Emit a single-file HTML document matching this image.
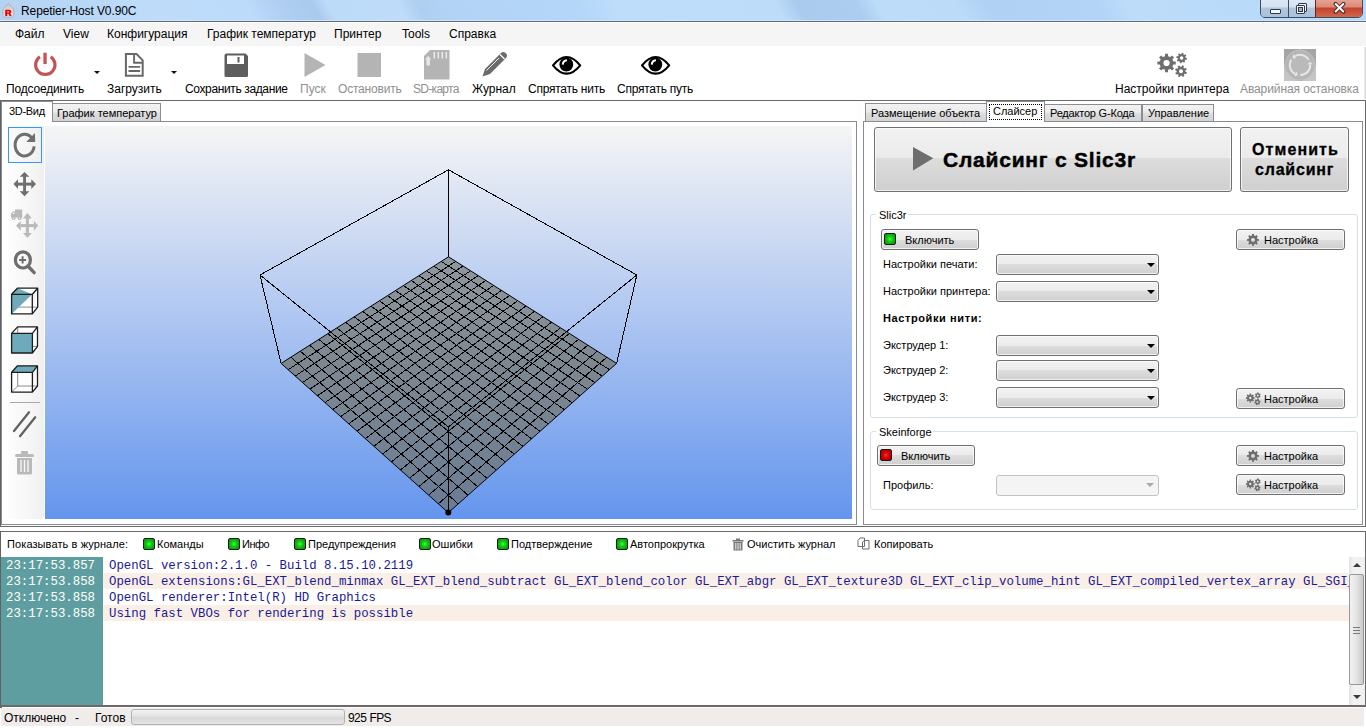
<!DOCTYPE html>
<html><head><meta charset="utf-8">
<style>
*{margin:0;padding:0;box-sizing:border-box}
html,body{width:1366px;height:728px;overflow:hidden;background:#fff;font-family:"Liberation Sans",sans-serif;color:#000}
.a{position:absolute}
.t12{position:absolute;font-size:12px;line-height:12px;white-space:nowrap}
.t11{position:absolute;font-size:11px;line-height:11px;white-space:nowrap}
.dis{color:#8f8f8f}
.btn{position:absolute;border:1px solid #707070;border-radius:3px;background:linear-gradient(#f2f2f2 0%,#ebebeb 50%,#dddddd 50%,#cfcfcf 100%);box-shadow:inset 0 0 0 1px rgba(255,255,255,.7)}
.cmb{position:absolute;width:163px;height:21px;border:1px solid #707070;border-radius:3px;background:linear-gradient(#f2f2f2 0%,#ebebeb 50%,#dddddd 50%,#cfcfcf 100%);box-shadow:inset 0 0 0 1px rgba(255,255,255,.7)}
.cmb:after{content:"";position:absolute;left:150px;top:8px;border-left:4px solid transparent;border-right:4px solid transparent;border-top:4px solid #000}
.led{position:absolute;width:12px;height:12px;border:1px solid #1a1a1a;border-radius:2px}
.g{background:radial-gradient(circle at 50% 50%,#3cff3c 0,#10c010 45%,#009000 100%)}
.r{background:radial-gradient(circle at 50% 50%,#ff3030 0,#d00000 45%,#a00000 100%)}
.tab{position:absolute;border:1px solid #898c95;border-bottom:none;background:linear-gradient(#f3f3f3,#ebebeb 50%,#dddddd 51%,#cfcfcf)}
.tabsel{position:absolute;border:1px solid #898c95;border-bottom:none;background:#fff}
.mono{position:absolute;font-family:"Liberation Mono",monospace;font-size:12.36px;line-height:12px;white-space:nowrap}
</style></head><body>
<!-- title bar -->
<div class="a" style="left:0;top:0;width:1366px;height:20px;background:linear-gradient(60deg,#b4d3f3 0.4%,#b9d8f7 7.7%,#bedcfa 11.3%,#bcdaf9 18.6%,#b0cff2 20.7%,#a9caee 23.3%,#bcdbf9 24.4%,#bedcfa 29.5%,#afcff1 30.9%,#b2d3f5 33.1%,#b4d6f8 42.5%,#bdddfb 45.4%,#bcdcfa 57.0%,#aacbee 58.5%,#accdf0 62.8%,#bcdcfa 64.3%,#bbdbf9 70.1%,#b0d1f4 72.3%,#b3d4f6 80.3%,#bcdcfa 82.4%,#b8d8f8 99.6%)"></div>
<div class="a" style="left:0;top:20px;width:1366px;height:1px;background:#d6e6f6"></div>
<div class="a" style="left:0;top:21px;width:1366px;height:1px;background:#5b6b7d"></div>
<div class="a" style="left:0;top:22px;width:1366px;height:1px;background:#fff"></div>
<svg class="a" style="left:2px;top:3px" width="13" height="15" viewBox="0 0 13 15"><defs><linearGradient id="ic" x1="0" y1="0" x2="0" y2="1"><stop offset="0" stop-color="#c8c8c8"/><stop offset="1" stop-color="#e8e8e8"/></linearGradient></defs><path d="M6.2 0.8 L9.5 3.5 Q11.8 5.5 11.8 8.5 L11.8 11.5 Q11.8 14 9.5 14 L3 14 Q0.8 14 0.8 11.5 L0.8 8.5 Q0.8 5.5 3 3.5 Z" fill="url(#ic)" stroke="#a8a8a8" stroke-width="0.8"/><path d="M3.2 6.8 H7.2 Q9.4 6.8 9.4 8.6 Q9.4 10 8.2 10.4 L9.8 13 H7.6 L6.4 10.8 H5.3 V13 H3.2 Z M5.3 8.2 V9.5 H6.9 Q7.4 9.5 7.4 8.85 Q7.4 8.2 6.9 8.2 Z" fill="#ee0000" fill-rule="evenodd"/></svg>
<div class="t12" style="left:21px;top:5px;letter-spacing:-0.1px">Repetier-Host V0.90C</div>
<!-- caption buttons -->
<div class="a" style="left:1260px;top:-3px;width:103px;height:21px;border:1px solid #3d4c5f;border-radius:0 0 5px 5px;overflow:hidden">
 <div class="a" style="left:0;top:0;width:27px;height:20px;background:linear-gradient(#dfeaf6 0%,#d3e1f0 45%,#b1c6dd 50%,#aac0d9 100%)"></div>
 <div class="a" style="left:27px;top:0;width:1px;height:20px;background:#3d4c5f"></div>
 <div class="a" style="left:28px;top:0;width:26px;height:20px;background:linear-gradient(#dfeaf6 0%,#d3e1f0 45%,#b1c6dd 50%,#aac0d9 100%)"></div>
 <div class="a" style="left:54px;top:0;width:1px;height:20px;background:#5a2a20"></div>
 <div class="a" style="left:55px;top:0;width:47px;height:20px;background:linear-gradient(#e9a89a 0%,#dc8a78 45%,#c4432c 50%,#d56a4f 100%)"></div>
 <div class="a" style="left:9px;top:11px;width:11px;height:5px;background:#f4f6f9;border:1px solid #2e3a48;border-radius:1px"></div>
 <div class="a" style="left:37px;top:5px;width:9px;height:9px;border:1px solid #2e3a48;background:#f4f6f9;border-radius:1px"></div>
 <div class="a" style="left:35px;top:7px;width:9px;height:9px;border:1px solid #2e3a48;background:#f4f6f9;border-radius:1px"></div>
 <div class="a" style="left:37px;top:9px;width:5px;height:5px;border:1px solid #2e3a48;background:#9fb4cc"></div>
 <svg class="a" style="left:72px;top:4px" width="13" height="12" viewBox="0 0 13 12"><path d="M2.5 1.8 L10.5 9.8 M10.5 1.8 L2.5 9.8" stroke="#3b2a28" stroke-width="3.8" stroke-linecap="round"/><path d="M2.7 2 L10.3 9.6 M10.3 2 L2.7 9.6" stroke="#f6f6f6" stroke-width="2.1" stroke-linecap="round"/></svg>
</div>
<!-- menu bar -->
<div class="a" style="left:0;top:23px;width:1366px;height:23px;background:#f5f5f5"></div>
<div class="t12" style="left:15px;top:28px">Файл</div>
<div class="t12" style="left:63px;top:28px">View</div>
<div class="t12" style="left:107px;top:28px">Конфигурация</div>
<div class="t12" style="left:207px;top:28px">График температур</div>
<div class="t12" style="left:334px;top:28px">Принтер</div>
<div class="t12" style="left:402px;top:28px">Tools</div>
<div class="t12" style="left:449px;top:28px">Справка</div>
<!-- toolbar -->
<div class="a" style="left:0;top:46px;width:1366px;height:54px;background:#fff"></div>
<svg class="a" style="left:0;top:46px" width="1366" height="54" viewBox="0 46 1366 54">
 <!-- power -->
 <path d="M39.92 56.73 A9.7 9.7 0 1 0 50.68 56.73" fill="none" stroke="#c45454" stroke-width="3.1"/>
 <rect x="43.4" y="52.7" width="3.3" height="11.4" fill="#c45454"/>
 <path d="M94 71 h6 l-3 3 z" fill="#111"/>
 <!-- document -->
 <path d="M125.9 54.1 H136.6 L142.7 60.4 V75.8 H125.9 Z" fill="#fff" stroke="#686868" stroke-width="2" stroke-linejoin="miter"/>
 <path d="M134.1 54.1 V62.7 H142.7" fill="none" stroke="#686868" stroke-width="1.9"/>
 <path d="M129.2 66.8 H139.4 M129.2 71 H139.4" stroke="#686868" stroke-width="1.8" stroke-linecap="round"/>
 <path d="M171 71 h6 l-3 3 z" fill="#111"/>
 <!-- floppy -->
 <path d="M226.5 53.5 H245.5 L248 56 V75.5 Q248 77 246.5 77 H226 Q224.5 77 224.5 75.5 V55.5 Q224.5 53.5 226.5 53.5 Z" fill="#5e5e5e"/>
 <rect x="227" y="55.5" width="17" height="8.5" fill="#fff"/>
 <rect x="237.5" y="57" width="2" height="5.5" fill="#5e5e5e"/>
 <!-- play disabled -->
 <path d="M304.5 53 L325.5 65 L304.5 77 Z" fill="#b4b4b4"/>
 <!-- stop disabled -->
 <rect x="357.5" y="53" width="23.5" height="24" fill="#b4b4b4"/>
 <!-- sd card -->
 <path d="M430 50 H449.5 V79.5 H424 V56 Z" fill="#b4b4b4"/>
 <rect x="433.5" y="52" width="1.6" height="6.5" fill="#e8e8e8"/>
 <rect x="437.5" y="52" width="1.6" height="6.5" fill="#e8e8e8"/>
 <rect x="441.5" y="52" width="1.6" height="6.5" fill="#e8e8e8"/>
 <rect x="445.5" y="52" width="1.6" height="6.5" fill="#e8e8e8"/>
 <path d="M428.2 55.7 L431.3 59.6 H429.9 V65.6 H426.5 V59.6 H425.1 Z" fill="#e8e8e8"/>
 <!-- pencil -->
 <path d="M482.5 76.5 L485 69 L501 53 Q503.5 51 505.5 53 L506 53.5 Q508 55.5 506 58 L490 74 Z" fill="#6b6b6b"/>
 <path d="M486.5 70.5 L499 58" stroke="#fff" stroke-width="0.9"/>
 <path d="M500 54.5 L504.5 59" stroke="#fff" stroke-width="1.2"/>
 <!-- eyes -->
 <g id="eye">
 <path d="M553 65.3 Q566.6 48.6 580.2 65.3 Q566.6 82 553 65.3 Z" fill="#fff" stroke="#000" stroke-width="2.1" stroke-linejoin="round"/>
 <circle cx="566.3" cy="64.5" r="6.9" fill="#000"/>
 <path d="M562.8 64.6 Q563 60.4 567 60.2" stroke="#fff" stroke-width="2" fill="none"/>
 </g>
 <use href="#eye" x="89"/>
 <!-- gears -->
 <path d="M1165.08 56.16 L1165.02 53.83 L1168.08 53.83 L1168.02 56.16 L1170.35 57.12 L1171.96 55.43 L1174.12 57.59 L1172.43 59.20 L1173.39 61.53 L1175.72 61.47 L1175.72 64.53 L1173.39 64.47 L1172.43 66.80 L1174.12 68.41 L1171.96 70.57 L1170.35 68.88 L1168.02 69.84 L1168.08 72.17 L1165.02 72.17 L1165.08 69.84 L1162.75 68.88 L1161.14 70.57 L1158.98 68.41 L1160.67 66.80 L1159.71 64.47 L1157.38 64.53 L1157.38 61.47 L1159.71 61.53 L1160.67 59.20 L1158.98 57.59 L1161.14 55.43 L1162.75 57.12 Z M1169.65 63.00 A3.10 3.10 0 1 0 1163.45 63.00 A3.10 3.10 0 1 0 1169.65 63.00 Z M1181.50 54.00 L1181.72 52.70 L1183.55 53.07 L1183.25 54.35 L1184.36 55.10 L1185.43 54.34 L1186.46 55.89 L1185.34 56.59 L1185.60 57.90 L1186.90 58.12 L1186.53 59.95 L1185.25 59.65 L1184.50 60.76 L1185.26 61.83 L1183.71 62.86 L1183.01 61.74 L1181.70 62.00 L1181.48 63.30 L1179.65 62.93 L1179.95 61.65 L1178.84 60.90 L1177.77 61.66 L1176.74 60.11 L1177.86 59.41 L1177.60 58.10 L1176.30 57.88 L1176.67 56.05 L1177.95 56.35 L1178.70 55.24 L1177.94 54.17 L1179.49 53.14 L1180.19 54.26 Z M1183.40 58.00 A1.80 1.80 0 1 0 1179.80 58.00 A1.80 1.80 0 1 0 1183.40 58.00 Z M1181.57 66.74 L1182.03 65.29 L1184.02 66.01 L1183.44 67.42 L1184.56 68.44 L1185.91 67.75 L1186.80 69.67 L1185.40 70.26 L1185.46 71.77 L1186.91 72.23 L1186.19 74.22 L1184.78 73.64 L1183.76 74.76 L1184.45 76.11 L1182.53 77.00 L1181.94 75.60 L1180.43 75.66 L1179.97 77.11 L1177.98 76.39 L1178.56 74.98 L1177.44 73.96 L1176.09 74.65 L1175.20 72.73 L1176.60 72.14 L1176.54 70.63 L1175.09 70.17 L1175.81 68.18 L1177.22 68.76 L1178.24 67.64 L1177.55 66.29 L1179.47 65.40 L1180.06 66.80 Z M1183.00 71.20 A2.00 2.00 0 1 0 1179.00 71.20 A2.00 2.00 0 1 0 1183.00 71.20 Z" fill="#6e6e6e" fill-rule="evenodd"/>
 <!-- emergency -->
 <rect x="1284" y="49" width="32" height="32" fill="#b3b3b3"/>
 <path d="M1284 49 H1300 L1284 65 Z M1316 49 H1300 L1316 65 Z" fill="#a5a5a5"/>
 <path d="M1284 81 V67 L1298 81 Z M1316 81 V67 L1302 81 Z" fill="#c6c6c6"/>
 <circle cx="1300" cy="65" r="15" fill="#b5b5b5" stroke="#c2c2c2" stroke-width="1"/>
 <circle cx="1300" cy="65" r="12.3" fill="#bababa"/>
 <path d="M1308.65 59.59 A10.2 10.2 0 0 0 1294.59 56.35 M1300.36 75.19 A10.2 10.2 0 0 0 1310.19 64.47 M1291.26 59.75 A10.2 10.2 0 0 0 1295.37 74.09 " fill="none" stroke="#e9e9e9" stroke-width="1.7"/>
 <path d="M1292.66 57.91 L1296.08 58.72 L1293.11 53.98 Z M1309.75 62.02 L1307.39 64.61 L1312.98 64.32 Z M1297.71 74.94 L1296.64 71.59 L1294.10 76.58 Z " fill="#e9e9e9"/>
</svg>
<div class="a" style="left:1364px;top:47px;width:2px;height:52px;background:linear-gradient(90deg,#f4f4f4,#d4d4d4)"></div>
<div class="t12" style="left:6px;top:83px;letter-spacing:-0.17px">Подсоединить</div>
<div class="t12" style="left:107px;top:83px">Загрузить</div>
<div class="t12" style="left:185px;top:83px;letter-spacing:-0.37px">Сохранить задание</div>
<div class="t12 dis" style="left:300px;top:83px">Пуск</div>
<div class="t12 dis" style="left:338px;top:83px;letter-spacing:-0.2px">Остановить</div>
<div class="t12 dis" style="left:413px;top:83px;letter-spacing:-0.7px">SD-карта</div>
<div class="t12" style="left:472px;top:83px">Журнал</div>
<div class="t12" style="left:528px;top:83px;letter-spacing:-0.25px">Спрятать нить</div>
<div class="t12" style="left:617px;top:83px;letter-spacing:-0.25px">Спрятать путь</div>
<div class="t12" style="left:1115px;top:83px">Настройки принтера</div>
<div class="t12 dis" style="left:1240px;top:83px;letter-spacing:-0.1px">Аварийная остановка</div>
<!-- main split area -->
<div class="a" style="left:0;top:100px;width:1366px;height:1px;background:#696969"></div>
<div class="a" style="left:0;top:100px;width:1px;height:427px;background:#616161"></div>
<div class="a" style="left:1365px;top:100px;width:1px;height:427px;background:#6a6a6a"></div>
<div class="a" style="left:0;top:526px;width:1366px;height:1px;background:#6a6a6a"></div>
<div class="a" style="left:0;top:527px;width:1366px;height:4px;background:#fff"></div>
<!-- left panel frame -->
<div class="a" style="left:1px;top:121px;width:856px;height:404px;border:1px solid #898c95"></div>
<div class="tabsel" style="left:1px;top:101px;width:52px;height:21px"></div>
<div class="t11" style="left:9px;top:106px;letter-spacing:-0.3px">3D-Вид</div>
<div class="tab" style="left:52px;top:103px;width:109px;height:18px;background:linear-gradient(#f2f2f2 0%,#ebebeb 45%,#dddddd 55%,#d3d3d3 100%)"></div>
<div class="t11" style="left:57px;top:108px">График температур</div>
<!-- left sidebar -->
<div class="a" style="left:8px;top:126px;width:36px;height:393px;border-radius:0 0 3px 3px;background:linear-gradient(90deg,#fdfdfd,#f4f4f4 75%,#efefef)"></div>
<div class="a" style="left:8px;top:127px;width:34px;height:36px;border:1px solid #3399ff;background:linear-gradient(90deg,#fafafa,#f0f0f0)"></div>
<svg class="a" style="left:0;top:120px" width="45" height="400" viewBox="0 120 45 400">
 <!-- rotate -->
 <path d="M34.16 146.4 A9.55 10.85 0 1 1 31.6 137.6" fill="none" stroke="#6e6e6e" stroke-width="3"/>
 <path d="M34.9 133.1 L26.3 141.9 L35.2 141.9 Z" fill="#6e6e6e"/>
 <!-- move -->
 <g fill="#6e6e6e">
 <path d="M24.5 172 L29.3 176.8 H19.7 Z M24.5 196.2 L29.3 191.2 H19.7 Z M13.5 184.1 L18 179.2 V189 Z M36 184.1 L31.3 179.2 V189 Z"/>
 <rect x="23.1" y="176" width="2.9" height="16"/><rect x="17" y="182.6" width="15" height="3"/>
 </g>
 <!-- move object disabled -->
 <g fill="#b9b9b9">
 <path d="M27.4 213 L31.9 218.5 H22.9 Z M27.4 237.8 L31.9 233 H22.9 Z M16.1 225.6 L20.7 221 V230.7 Z M38.2 225.6 L33.9 221 V230.7 Z"/>
 <rect x="25.9" y="218" width="3" height="15.5"/><rect x="20.5" y="224.1" width="13.5" height="3"/>
 <path d="M15 209.5 H22.2 V217.5 H15 Z M11 213.5 L13 211.5 H15 V217.5 H11 Z"/><circle cx="13.6" cy="218.2" r="1.9"/><circle cx="19.6" cy="218.2" r="1.9"/>
 </g>
 <path d="M12.2 214 L13.4 212.4 H14.4 V214 Z" fill="#f4f4f4"/>
 <circle cx="13.6" cy="218.2" r="0.7" fill="#f4f4f4"/><circle cx="19.6" cy="218.2" r="0.7" fill="#f4f4f4"/>
 <!-- zoom -->
 <ellipse cx="22.9" cy="259.9" rx="7.5" ry="8.1" fill="none" stroke="#6e6e6e" stroke-width="3.2"/>
 <path d="M29 267.2 L34.2 272.6" stroke="#6e6e6e" stroke-width="3.4" stroke-linecap="round"/>
 <path d="M22.6 256.3 V263.5 M19.1 259.9 H26.1" stroke="#6e6e6e" stroke-width="2"/>
 <!-- cube iso -->
 <path d="M11.6 294.3 H32.3 V313.9 H11.6 Z M11.6 294.3 L17.4 288.2 H37.7 L32.3 294.3 M37.7 288.2 V307.1 L32.3 313.9" fill="#fff"/>
 <path d="M17.4 288.2 L32.3 294.3 L11.6 313.9 L11.6 294.3 Z" fill="#6eaabb"/>
 <path d="M18.5 307.1 H37.7" stroke="#8a8a8a" stroke-width="1"/>
 <g stroke="#1c1c1c" stroke-width="1.3" fill="none" stroke-linejoin="round">
  <path d="M11.6 294.3 H32.3 V313.9 H11.6 Z M11.6 294.3 L17.4 288.2 H37.7 L32.3 294.3 M37.7 288.2 V307.1 L32.3 313.9"/>
 </g>
 <!-- cube front -->
 <path d="M17.6 327 H37.5 V346.4 L32.4 353 M11.6 333.4 L17.6 327" fill="#fff"/>
 <path d="M17.7 327 V333.4 M17.7 346.4 H37.5" stroke="#8a8a8a" stroke-width="1" fill="none"/>
 <path d="M11.6 333.4 H32.4 V353 H11.6 Z" fill="#6eaabb"/>
 <g stroke="#1c1c1c" stroke-width="1.3" fill="none" stroke-linejoin="round">
  <path d="M11.6 333.4 H32.4 V353 H11.6 Z M11.6 333.4 L17.6 326.9 H37.5 L32.4 333.4 M37.5 326.9 V346.4 L32.4 353"/>
 </g>
 <!-- cube top -->
 <path d="M11.6 372.3 H32.4 V392.1 H11.6 Z M37.5 365.8 V386 L32.4 392.1" fill="#fff"/>
 <path d="M17.7 372.3 V386 H37.5 M17.7 386 L11.6 392.1" stroke="#8a8a8a" stroke-width="1" fill="none"/>
 <path d="M11.6 372.3 L17.5 365.8 H37.5 L32.4 372.3 Z" fill="#6eaabb"/>
 <g stroke="#1c1c1c" stroke-width="1.3" fill="none" stroke-linejoin="round">
  <path d="M11.6 372.3 H32.4 V392.1 H11.6 Z M11.6 372.3 L17.5 365.8 H37.5 L32.4 372.3 M37.5 365.8 V386 L32.4 392.1"/>
 </g>
 <!-- separator -->
 <path d="M10 402.5 H40" stroke="#a8a8a8" stroke-width="1"/>
 <!-- slashes -->
 <path d="M14 431 L29 412.3 M20 436.2 L35.2 417.3" stroke="#636363" stroke-width="2.3" stroke-linecap="round"/>
 <!-- trash -->
 <g fill="#b9b9b9">
  <rect x="15" y="454" width="19" height="3" rx="1.5"/><rect x="21" y="451" width="7" height="3" rx="1"/>
  <path d="M17 458 H32 V473 Q32 474.5 30.5 474.5 H18.5 Q17 474.5 17 473 Z"/>
 </g>
 <path d="M21 460 V472 M24.5 460 V472 M28 460 V472" stroke="#f6f6f6" stroke-width="1.4"/>
</svg>
<!-- viewport -->
<svg class="a" style="left:45px;top:126px" width="807" height="393" viewBox="45 126 807 393">
 <defs>
  <linearGradient id="bg" x1="0" y1="126" x2="0" y2="519" gradientUnits="userSpaceOnUse"><stop offset="0" stop-color="#f5f5f5"/><stop offset="1" stop-color="#6495ed"/></linearGradient>
  <linearGradient id="fl" x1="0" y1="257" x2="0" y2="513" gradientUnits="userSpaceOnUse"><stop offset="0" stop-color="#8f989e"/><stop offset="0.42" stop-color="#7d8790"/><stop offset="1" stop-color="#6a7d95"/></linearGradient>
 </defs>
 <rect x="45" y="126" width="807" height="393" fill="url(#bg)"/>
 <path d="M448.5 256.8 L616.6 363.4 L448.3 512.7 L281.1 363.4 Z" fill="url(#fl)" stroke="#000" stroke-width="1"/>
 <path d="M455.7 261.4L288.1 369.7 M441.3 261.4L609.5 369.7 M463.1 266.0L295.2 376.0 M433.9 266.1L602.3 376.1 M470.5 270.8L302.5 382.5 M426.5 270.8L595.0 382.6 M478.1 275.6L309.9 389.1 M418.9 275.6L587.5 389.2 M485.8 280.4L317.4 395.8 M411.2 280.5L579.9 395.9 M493.6 285.4L325.0 402.6 M403.4 285.5L572.2 402.8 M501.5 290.4L332.8 409.6 M395.5 290.5L564.4 409.7 M509.5 295.5L340.7 416.6 M387.5 295.6L556.4 416.8 M517.7 300.7L348.8 423.8 M379.4 300.8L548.3 424.0 M526.0 305.9L357.0 431.2 M371.1 306.1L540.0 431.4 M534.4 311.3L365.3 438.6 M362.8 311.4L531.6 438.8 M542.9 316.7L373.9 446.2 M354.2 316.8L523.0 446.4 M551.6 322.2L382.6 454.0 M345.6 322.3L514.3 454.2 M560.5 327.8L391.4 461.9 M336.8 327.9L505.4 462.1 M569.4 333.5L400.4 470.0 M327.9 333.6L496.3 470.1 M578.6 339.3L409.6 478.2 M318.8 339.4L487.1 478.3 M587.8 345.2L419.0 486.5 M309.6 345.2L477.7 486.7 M597.3 351.1L428.6 495.1 M300.3 351.2L468.1 495.2 M606.8 357.2L438.3 503.8 M290.8 357.2L458.3 503.9" stroke="#000" stroke-width="1" fill="none" shape-rendering="crispEdges"/>
 <path d="M448.5 169.8 L260 275 L448.3 427 L636.8 275 Z M448.5 169.8 V256.8 M260 275 L281.1 363.4 M636.8 275 L616.6 363.4 M448.3 427 V512.7" stroke="#000" stroke-width="1" fill="none" shape-rendering="crispEdges"/>
 <circle cx="448.3" cy="512.5" r="3" fill="#000"/>
</svg>
<!-- right panel -->
<div class="a" style="left:857px;top:101px;width:6px;height:425px;background:#fdfdfd"></div>
<div class="a" style="left:863px;top:121px;width:500px;height:404px;border:1px solid #898c95"></div>
<div class="tab" style="left:865px;top:103px;width:122px;height:18px;background:linear-gradient(#f2f2f2 0%,#ebebeb 45%,#dddddd 55%,#d3d3d3 100%)"></div>
<div class="t11" style="left:871px;top:108px">Размещение объекта</div>
<div class="tabsel" style="left:986px;top:101px;width:59px;height:21px"></div>
<div class="a" style="left:989px;top:104px;width:53px;height:16px;border:1px dotted #000"></div>
<div class="t11" style="left:993px;top:106px">Слайсер</div>
<div class="tab" style="left:1044px;top:104px;width:98px;height:17px;background:linear-gradient(#f2f2f2 0%,#ebebeb 45%,#dddddd 55%,#d3d3d3 100%)"></div>
<div class="t11" style="left:1050px;top:108px;letter-spacing:-0.2px">Редактор G-Кода</div>
<div class="tab" style="left:1142px;top:104px;width:72px;height:17px;background:linear-gradient(#f2f2f2 0%,#ebebeb 45%,#dddddd 55%,#d3d3d3 100%)"></div>
<div class="t11" style="left:1148px;top:108px">Управление</div>
<!-- slice buttons -->
<div class="btn" style="left:874px;top:127px;width:358px;height:65px;background:linear-gradient(#f2f2f2 0%,#ebebeb 47%,#dddddd 47%,#cfcfcf 100%)"></div>
<svg class="a" style="left:912px;top:146px" width="22" height="25" viewBox="0 0 22 25"><path d="M1 1 L21.3 12.3 L1 24.5 Z" fill="#6e6e6e"/></svg>
<div class="a" style="left:943px;top:149px;font-size:21px;line-height:21px;font-weight:bold;letter-spacing:0.78px;-webkit-text-stroke:0.45px #000;white-space:nowrap">Слайсинг с Slic3r</div>
<div class="btn" style="left:1240px;top:127px;width:109px;height:65px;background:linear-gradient(#f2f2f2 0%,#ebebeb 47%,#dddddd 47%,#cfcfcf 100%)"></div>
<div class="a" style="left:1252px;top:140px;font-size:16px;line-height:20px;font-weight:bold;letter-spacing:1.1px;-webkit-text-stroke:0.3px #000;white-space:nowrap">Отменить</div><div class="a" style="left:1255px;top:160px;font-size:16px;line-height:20px;font-weight:bold;letter-spacing:0.8px;-webkit-text-stroke:0.3px #000;white-space:nowrap">слайсинг</div>
<!-- Slic3r group -->
<div class="a" style="left:870px;top:214px;width:488px;height:204px;border:1px solid #d5dfe5;border-radius:3px"></div>
<div class="a" style="left:876px;top:208px;width:32px;height:12px;background:#fff"></div>
<div class="t11" style="left:879px;top:210px">Slic3r</div>
<div class="btn" style="left:881px;top:229px;width:98px;height:21px"></div>
<div class="led g" style="left:884px;top:233px"></div>
<div class="t11" style="left:905px;top:235px">Включить</div>
<div class="btn" style="left:1236px;top:229px;width:109px;height:21px"></div>
<svg class="a" style="left:0;top:0;overflow:visible" width="1" height="1"><path d="M1252.03 235.40 L1252.01 233.98 L1253.99 233.98 L1253.97 235.40 L1255.50 236.04 L1256.49 235.02 L1257.88 236.41 L1256.86 237.40 L1257.50 238.93 L1258.92 238.91 L1258.92 240.89 L1257.50 240.87 L1256.86 242.40 L1257.88 243.39 L1256.49 244.78 L1255.50 243.76 L1253.97 244.40 L1253.99 245.82 L1252.01 245.82 L1252.03 244.40 L1250.50 243.76 L1249.51 244.78 L1248.12 243.39 L1249.14 242.40 L1248.50 240.87 L1247.08 240.89 L1247.08 238.91 L1248.50 238.93 L1249.14 237.40 L1248.12 236.41 L1249.51 235.02 L1250.50 236.04 Z M1254.90 239.90 A1.90 1.90 0 1 0 1251.10 239.90 A1.90 1.90 0 1 0 1254.90 239.90 Z" fill="#6e6e6e" fill-rule="evenodd"/></svg>
<div class="t11" style="left:1264px;top:235px">Настройка</div>
<div class="t11" style="left:883px;top:259px">Настройки печати:</div>
<div class="cmb" style="left:996px;top:254px"></div>
<div class="t11" style="left:883px;top:286px">Настройки принтера:</div>
<div class="cmb" style="left:996px;top:281px"></div>
<div class="t11" style="left:883px;top:313px;font-weight:bold;letter-spacing:0.6px">Настройки нити:</div>
<div class="t11" style="left:883px;top:340px">Экструдер 1:</div>
<div class="cmb" style="left:996px;top:335px"></div>
<div class="t11" style="left:883px;top:365px">Экструдер 2:</div>
<div class="cmb" style="left:996px;top:360px"></div>
<div class="t11" style="left:883px;top:392px">Экструдер 3:</div>
<div class="cmb" style="left:996px;top:387px"></div>
<div class="btn" style="left:1236px;top:388px;width:109px;height:21px"></div>
<svg class="a" style="left:0;top:0;overflow:visible" width="1" height="1"><path d="M1249.58 394.68 L1249.56 393.56 L1251.04 393.56 L1251.02 394.68 L1252.14 395.14 L1252.92 394.34 L1253.96 395.38 L1253.16 396.16 L1253.62 397.28 L1254.74 397.26 L1254.74 398.74 L1253.62 398.72 L1253.16 399.84 L1253.96 400.62 L1252.92 401.66 L1252.14 400.86 L1251.02 401.32 L1251.04 402.44 L1249.56 402.44 L1249.58 401.32 L1248.46 400.86 L1247.68 401.66 L1246.64 400.62 L1247.44 399.84 L1246.98 398.72 L1245.86 398.74 L1245.86 397.26 L1246.98 397.28 L1247.44 396.16 L1246.64 395.38 L1247.68 394.34 L1248.46 395.14 Z M1251.45 398.00 A1.15 1.15 0 1 0 1249.15 398.00 A1.15 1.15 0 1 0 1251.45 398.00 Z M1257.07 393.32 L1257.02 392.60 L1258.58 392.60 L1258.53 393.32 L1259.32 393.77 L1259.92 393.38 L1260.70 394.72 L1260.05 395.05 L1260.05 395.95 L1260.70 396.28 L1259.92 397.62 L1259.32 397.23 L1258.53 397.68 L1258.58 398.40 L1257.02 398.40 L1257.07 397.68 L1256.28 397.23 L1255.68 397.62 L1254.90 396.28 L1255.55 395.95 L1255.55 395.05 L1254.90 394.72 L1255.68 393.38 L1256.28 393.77 Z M1258.70 395.50 A0.90 0.90 0 1 0 1256.90 395.50 A0.90 0.90 0 1 0 1258.70 395.50 Z M1257.34 399.60 L1257.52 398.80 L1259.10 399.29 L1258.80 400.05 L1259.45 400.75 L1260.23 400.51 L1260.60 402.12 L1259.79 402.24 L1259.51 403.15 L1260.11 403.70 L1258.89 404.83 L1258.38 404.19 L1257.46 404.40 L1257.28 405.20 L1255.70 404.71 L1256.00 403.95 L1255.35 403.25 L1254.57 403.49 L1254.20 401.88 L1255.01 401.76 L1255.29 400.85 L1254.69 400.30 L1255.91 399.17 L1256.42 399.81 Z M1258.35 402.00 A0.95 0.95 0 1 0 1256.45 402.00 A0.95 0.95 0 1 0 1258.35 402.00 Z" fill="#6e6e6e" fill-rule="evenodd"/></svg>
<div class="t11" style="left:1264px;top:394px">Настройка</div>
<!-- Skeinforge group -->
<div class="a" style="left:870px;top:431px;width:488px;height:79px;border:1px solid #d5dfe5;border-radius:3px"></div>
<div class="a" style="left:876px;top:425px;width:57px;height:12px;background:#fff"></div>
<div class="t11" style="left:879px;top:427px">Skeinforge</div>
<div class="btn" style="left:877px;top:445px;width:98px;height:21px"></div>
<div class="led r" style="left:880px;top:449px"></div>
<div class="t11" style="left:901px;top:451px">Включить</div>
<div class="btn" style="left:1236px;top:445px;width:109px;height:21px"></div>
<svg class="a" style="left:0;top:0;overflow:visible" width="1" height="1"><path d="M1252.03 451.40 L1252.01 449.98 L1253.99 449.98 L1253.97 451.40 L1255.50 452.04 L1256.49 451.02 L1257.88 452.41 L1256.86 453.40 L1257.50 454.93 L1258.92 454.91 L1258.92 456.89 L1257.50 456.87 L1256.86 458.40 L1257.88 459.39 L1256.49 460.78 L1255.50 459.76 L1253.97 460.40 L1253.99 461.82 L1252.01 461.82 L1252.03 460.40 L1250.50 459.76 L1249.51 460.78 L1248.12 459.39 L1249.14 458.40 L1248.50 456.87 L1247.08 456.89 L1247.08 454.91 L1248.50 454.93 L1249.14 453.40 L1248.12 452.41 L1249.51 451.02 L1250.50 452.04 Z M1254.90 455.90 A1.90 1.90 0 1 0 1251.10 455.90 A1.90 1.90 0 1 0 1254.90 455.90 Z" fill="#6e6e6e" fill-rule="evenodd"/></svg>
<div class="t11" style="left:1264px;top:451px">Настройка</div>
<div class="t11" style="left:883px;top:480px">Профиль:</div>
<div class="a" style="left:996px;top:475px;width:163px;height:21px;border:1px solid #c3c3c3;border-radius:3px;background:#f4f4f4"></div>
<div class="a" style="left:1146px;top:483px;border-left:4px solid transparent;border-right:4px solid transparent;border-top:4px solid #a8a8a8"></div>
<div class="btn" style="left:1236px;top:474px;width:109px;height:21px"></div>
<svg class="a" style="left:0;top:0;overflow:visible" width="1" height="1"><path d="M1249.58 480.68 L1249.56 479.56 L1251.04 479.56 L1251.02 480.68 L1252.14 481.14 L1252.92 480.34 L1253.96 481.38 L1253.16 482.16 L1253.62 483.28 L1254.74 483.26 L1254.74 484.74 L1253.62 484.72 L1253.16 485.84 L1253.96 486.62 L1252.92 487.66 L1252.14 486.86 L1251.02 487.32 L1251.04 488.44 L1249.56 488.44 L1249.58 487.32 L1248.46 486.86 L1247.68 487.66 L1246.64 486.62 L1247.44 485.84 L1246.98 484.72 L1245.86 484.74 L1245.86 483.26 L1246.98 483.28 L1247.44 482.16 L1246.64 481.38 L1247.68 480.34 L1248.46 481.14 Z M1251.45 484.00 A1.15 1.15 0 1 0 1249.15 484.00 A1.15 1.15 0 1 0 1251.45 484.00 Z M1257.07 479.32 L1257.02 478.60 L1258.58 478.60 L1258.53 479.32 L1259.32 479.77 L1259.92 479.38 L1260.70 480.72 L1260.05 481.05 L1260.05 481.95 L1260.70 482.28 L1259.92 483.62 L1259.32 483.23 L1258.53 483.68 L1258.58 484.40 L1257.02 484.40 L1257.07 483.68 L1256.28 483.23 L1255.68 483.62 L1254.90 482.28 L1255.55 481.95 L1255.55 481.05 L1254.90 480.72 L1255.68 479.38 L1256.28 479.77 Z M1258.70 481.50 A0.90 0.90 0 1 0 1256.90 481.50 A0.90 0.90 0 1 0 1258.70 481.50 Z M1257.34 485.60 L1257.52 484.80 L1259.10 485.29 L1258.80 486.05 L1259.45 486.75 L1260.23 486.51 L1260.60 488.12 L1259.79 488.24 L1259.51 489.15 L1260.11 489.70 L1258.89 490.83 L1258.38 490.19 L1257.46 490.40 L1257.28 491.20 L1255.70 490.71 L1256.00 489.95 L1255.35 489.25 L1254.57 489.49 L1254.20 487.88 L1255.01 487.76 L1255.29 486.85 L1254.69 486.30 L1255.91 485.17 L1256.42 485.81 Z M1258.35 488.00 A0.95 0.95 0 1 0 1256.45 488.00 A0.95 0.95 0 1 0 1258.35 488.00 Z" fill="#6e6e6e" fill-rule="evenodd"/></svg>
<div class="t11" style="left:1264px;top:480px">Настройка</div>
<!-- log panel -->
<div class="a" style="left:0;top:531px;width:1366px;height:1px;background:#6a6a6a"></div>
<div class="a" style="left:0;top:531px;width:1px;height:176px;background:#616161"></div>
<div class="a" style="left:1365px;top:531px;width:1px;height:176px;background:#6a6a6a"></div>
<div class="a" style="left:0;top:705px;width:1366px;height:2px;background:#6a6a6a"></div>
<div class="t11" style="left:7px;top:539px;letter-spacing:0.1px">Показывать в журнале:</div>
<div class="led g" style="left:143px;top:538px"></div><div class="t11" style="left:157px;top:539px">Команды</div>
<div class="led g" style="left:228px;top:538px"></div><div class="t11" style="left:242px;top:539px;letter-spacing:-0.5px">Инфо</div>
<div class="led g" style="left:294px;top:538px"></div><div class="t11" style="left:308px;top:539px">Предупреждения</div>
<div class="led g" style="left:419px;top:538px"></div><div class="t11" style="left:432px;top:539px">Ошибки</div>
<div class="led g" style="left:497px;top:538px"></div><div class="t11" style="left:511px;top:539px">Подтверждение</div>
<div class="led g" style="left:616px;top:538px"></div><div class="t11" style="left:630px;top:539px">Автопрокрутка</div>
<svg class="a" style="left:732px;top:538px" width="12" height="13" viewBox="0 0 12 13"><g fill="#7a7a7a"><rect x="0.5" y="2" width="11" height="1.6"/><rect x="4" y="0.5" width="4" height="1.5"/><path d="M1.5 4 H10.5 V12 Q10.5 12.5 10 12.5 H2 Q1.5 12.5 1.5 12 Z"/></g><path d="M3.8 5 V11.5 M6 5 V11.5 M8.2 5 V11.5" stroke="#fff" stroke-width="0.9"/></svg>
<div class="t11" style="left:747px;top:539px">Очистить журнал</div>
<svg class="a" style="left:857px;top:537px" width="13" height="13" viewBox="0 0 13 13"><path d="M1 3.5 L3 1 H7.5 V9.5 H1 Z M5.5 5 L7.5 3.5 H12 V12 H5.5 Z" fill="#fff" stroke="#6e6e6e" stroke-width="1"/></svg>
<div class="t11" style="left:874px;top:539px">Копировать</div>
<div class="a" style="left:1px;top:557px;width:102px;height:148px;background:#5f9ea0"></div>
<div class="a" style="left:103px;top:573px;width:1246px;height:16px;background:#faefe6"></div>
<div class="a" style="left:103px;top:605px;width:1246px;height:16px;background:#faefe6"></div>
<div class="mono" style="left:6px;top:560px;color:#fff">23:17:53.857</div>
<div class="mono" style="left:6px;top:576px;color:#fff">23:17:53.858</div>
<div class="mono" style="left:6px;top:592px;color:#fff">23:17:53.858</div>
<div class="mono" style="left:6px;top:608px;color:#fff">23:17:53.858</div>
<div class="a" style="left:103px;top:557px;width:1246px;height:80px;overflow:hidden">
<div class="mono" style="left:6px;top:3px;color:#1a1a96">OpenGL version:2.1.0 - Build 8.15.10.2119</div>
<div class="mono" style="left:6px;top:19px;color:#1a1a96">OpenGL extensions:GL_EXT_blend_minmax GL_EXT_blend_subtract GL_EXT_blend_color GL_EXT_abgr GL_EXT_texture3D GL_EXT_clip_volume_hint GL_EXT_compiled_vertex_array GL_SGI_texture_edge_clamp</div>
<div class="mono" style="left:6px;top:35px;color:#1a1a96">OpenGL renderer:Intel(R) HD Graphics</div>
<div class="mono" style="left:6px;top:51px;color:#1a1a96">Using fast VBOs for rendering is possible</div>
</div>
<!-- scrollbar -->
<div class="a" style="left:1349px;top:557px;width:16px;height:148px;background:linear-gradient(90deg,#e3e3e3,#f2f2f2 30%,#f0f0f0)"></div>
<div class="a" style="left:1353px;top:563px;border-left:4px solid transparent;border-right:4px solid transparent;border-bottom:4px solid #3a3a3a"></div>
<div class="a" style="left:1349px;top:574px;width:15px;height:111px;border:1px solid #989898;border-radius:2px;background:linear-gradient(90deg,#f2f2f2,#e6e6e6 45%,#cacaca)"></div>
<div class="a" style="left:1353px;top:627px;width:7px;height:7px;border-top:1px solid #7a7a7a;border-bottom:1px solid #7a7a7a"></div>
<div class="a" style="left:1353px;top:630px;width:7px;height:1px;background:#7a7a7a"></div>
<div class="a" style="left:1353px;top:695px;border-left:4px solid transparent;border-right:4px solid transparent;border-top:4px solid #3a3a3a"></div>
<!-- status bar -->
<div class="a" style="left:0;top:707px;width:1366px;height:21px;background:#fff"></div>
<div class="a" style="left:0;top:707px;width:2px;height:1px;background:#6a6a6a"></div>
<div class="a" style="left:1px;top:708px;width:1363px;height:18px;background:#f0ecea"></div>
<div class="t12" style="left:4px;top:712px">Отключено</div><div class="t12" style="left:75px;top:712px">-</div>
<div class="t12" style="left:95px;top:712px">Готов</div>
<div class="a" style="left:131px;top:709px;width:214px;height:16px;border:1px solid #b2b2b2;border-radius:3px;background:linear-gradient(#f3f3f3,#e2e2e2 45%,#d8d8d8 55%,#e4e4e4)"></div>
<div class="t12" style="left:348px;top:712px;letter-spacing:-0.6px;word-spacing:0.5px">925 FPS</div>
</body></html>
